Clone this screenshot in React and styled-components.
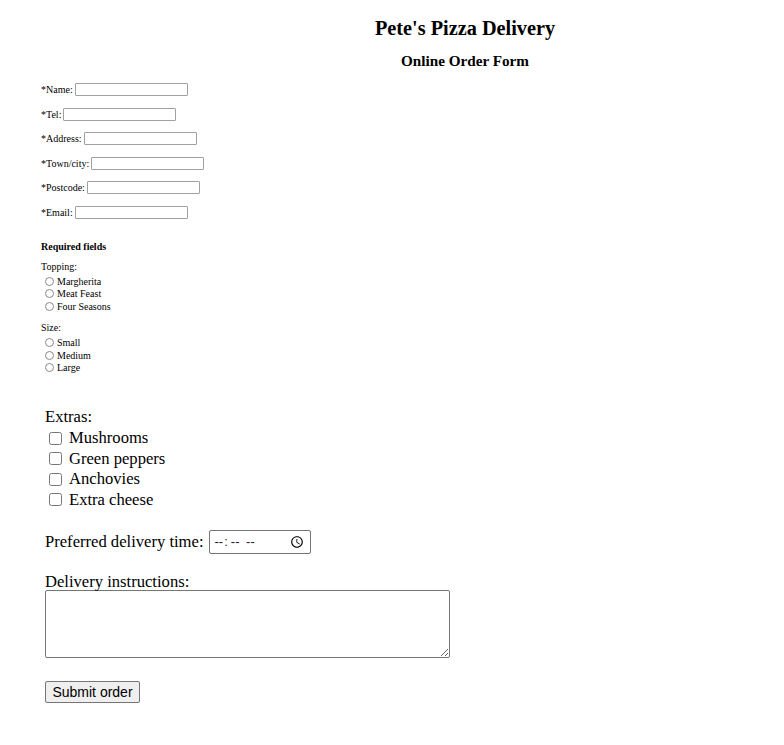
import React from "react";
import styled, { createGlobalStyle } from "styled-components";

const Global = createGlobalStyle`
  html, body { margin: 0; padding: 0; background: #fff; }
  body { font-family: "Liberation Serif", "Times New Roman", serif; color: #000; }
`;

const Page = styled.div`
  width: 784px;
  min-height: 745px;
  box-sizing: border-box;
  padding-top: 17px;
`;

const Header = styled.header`
  padding-left: 146px;
  text-align: center;
`;

const Title = styled.h1`
  margin: 0;
  font-size: 20.3px;
  line-height: 22px;
  font-weight: bold;
`;

const Subtitle = styled.h2`
  margin: 13px 0 0;
  font-size: 15.2px;
  line-height: 17px;
  font-weight: bold;
`;

const Form = styled.form`
  padding-left: 41px;
  margin-top: 14px;
`;

const Fields = styled.div`
  display: flex;
  flex-direction: column;
  gap: 11.6px;
  font-size: 10px;
`;

const FieldRow = styled.label`
  display: flex;
  align-items: center;
  gap: 2px;
  height: 13px;
`;

const TextInput = styled.input`
  box-sizing: border-box;
  width: 113px;
  height: 13px;
  padding: 0 2px;
  border: 1px solid #a0a0a0;
  border-radius: 1px;
  font-size: 9px;
  font-family: inherit;
  background: #fff;
`;

const Required = styled.p`
  margin: 22px 0 0;
  font-size: 10px;
  font-weight: bold;
  line-height: 12px;
`;

const Group = styled.div`
  margin-top: ${(p) => p.$top}px;
  font-size: 10px;
`;

const GroupLabel = styled.div`
  height: 14px;
  line-height: 12px;
`;

const RadioRow = styled.label`
  display: flex;
  align-items: center;
  height: 12.5px;
  padding-left: 4px;
  gap: 3px;
`;

const Radio = styled.input`
  appearance: none;
  box-sizing: border-box;
  width: 9px;
  height: 9px;
  margin: 0;
  border: 1px solid #8a8a8a;
  border-radius: 50%;
  background: #fff;
`;

const Lower = styled.div`
  padding-left: 4px;
  font-size: 16.6px;
  margin-top: 33px;
`;

const Legend = styled.div`
  line-height: 19px;
  margin-bottom: 2px;
`;

const CheckRow = styled.label`
  display: flex;
  align-items: center;
  height: 20.5px;
`;

const Check = styled.input`
  width: 13px;
  height: 13px;
  margin: 0 7px 0 4px;
`;

const TimeRow = styled.label`
  display: flex;
  align-items: center;
  gap: 5px;
  margin-top: 20px;
`;

const TimeInput = styled.input`
  box-sizing: border-box;
  width: 102px;
  height: 24px;
  border: 1px solid #767676;
  border-radius: 2px;
  font-family: "Liberation Sans", Arial, sans-serif;
  font-size: 13px;
  padding: 1px 3px 1px 4px;
  color: #222;

  &::-webkit-datetime-edit-hour-field,
  &::-webkit-datetime-edit-minute-field,
  &::-webkit-datetime-edit-ampm-field {
    letter-spacing: 2.5px;
    padding: 0 1px;
  }
  &::-webkit-datetime-edit-text {
    padding: 0 2px 0 0;
    letter-spacing: 2px;
  }
`;

const Instructions = styled.label`
  display: block;
  margin-top: 19px;
  line-height: 17px;
`;

const TextArea = styled.textarea`
  display: block;
  box-sizing: border-box;
  width: 405px;
  height: 68px;
  margin-top: 0;
  border: 1px solid #767676;
  border-radius: 2px;
  resize: both;
`;

const Submit = styled.button`
  box-sizing: border-box;
  margin-top: 23px;
  width: 95px;
  height: 22px;
  padding: 0 6px;
  border: 1px solid #767676;
  border-radius: 2px;
  background: #efefef;
  font-family: "Liberation Sans", Arial, sans-serif;
  font-size: 14px;
  color: #000;
`;

const contact = [
  ["*Name:", "text"],
  ["*Tel:", "tel"],
  ["*Address:", "text"],
  ["*Town/city:", "text"],
  ["*Postcode:", "text"],
  ["*Email:", "email"],
];

export default function App() {
  return (
    <Page>
      <Global />
      <Header>
        <Title>Pete's Pizza Delivery</Title>
        <Subtitle>Online Order Form</Subtitle>
      </Header>
      <Form onSubmit={(e) => e.preventDefault()}>
        <Fields>
          {contact.map(([label, type]) => (
            <FieldRow key={label}>
              {label}
              <TextInput type={type} />
            </FieldRow>
          ))}
        </Fields>
        <Required>Required fields</Required>
        <Group $top={8}>
          <GroupLabel>Topping:</GroupLabel>
          {["Margherita", "Meat Feast", "Four Seasons"].map((t) => (
            <RadioRow key={t}>
              <Radio type="radio" name="topping" />
              {t}
            </RadioRow>
          ))}
        </Group>
        <Group $top={10}>
          <GroupLabel>Size:</GroupLabel>
          {["Small", "Medium", "Large"].map((t) => (
            <RadioRow key={t}>
              <Radio type="radio" name="size" />
              {t}
            </RadioRow>
          ))}
        </Group>
        <Lower>
          <Legend>Extras:</Legend>
          {["Mushrooms", "Green peppers", "Anchovies", "Extra cheese"].map((t) => (
            <CheckRow key={t}>
              <Check type="checkbox" />
              {t}
            </CheckRow>
          ))}
          <TimeRow>
            Preferred delivery time:
            <TimeInput type="time" />
          </TimeRow>
          <Instructions>
            Delivery instructions:
            <TextArea />
          </Instructions>
          <Submit type="submit">Submit order</Submit>
        </Lower>
      </Form>
    </Page>
  );
}
